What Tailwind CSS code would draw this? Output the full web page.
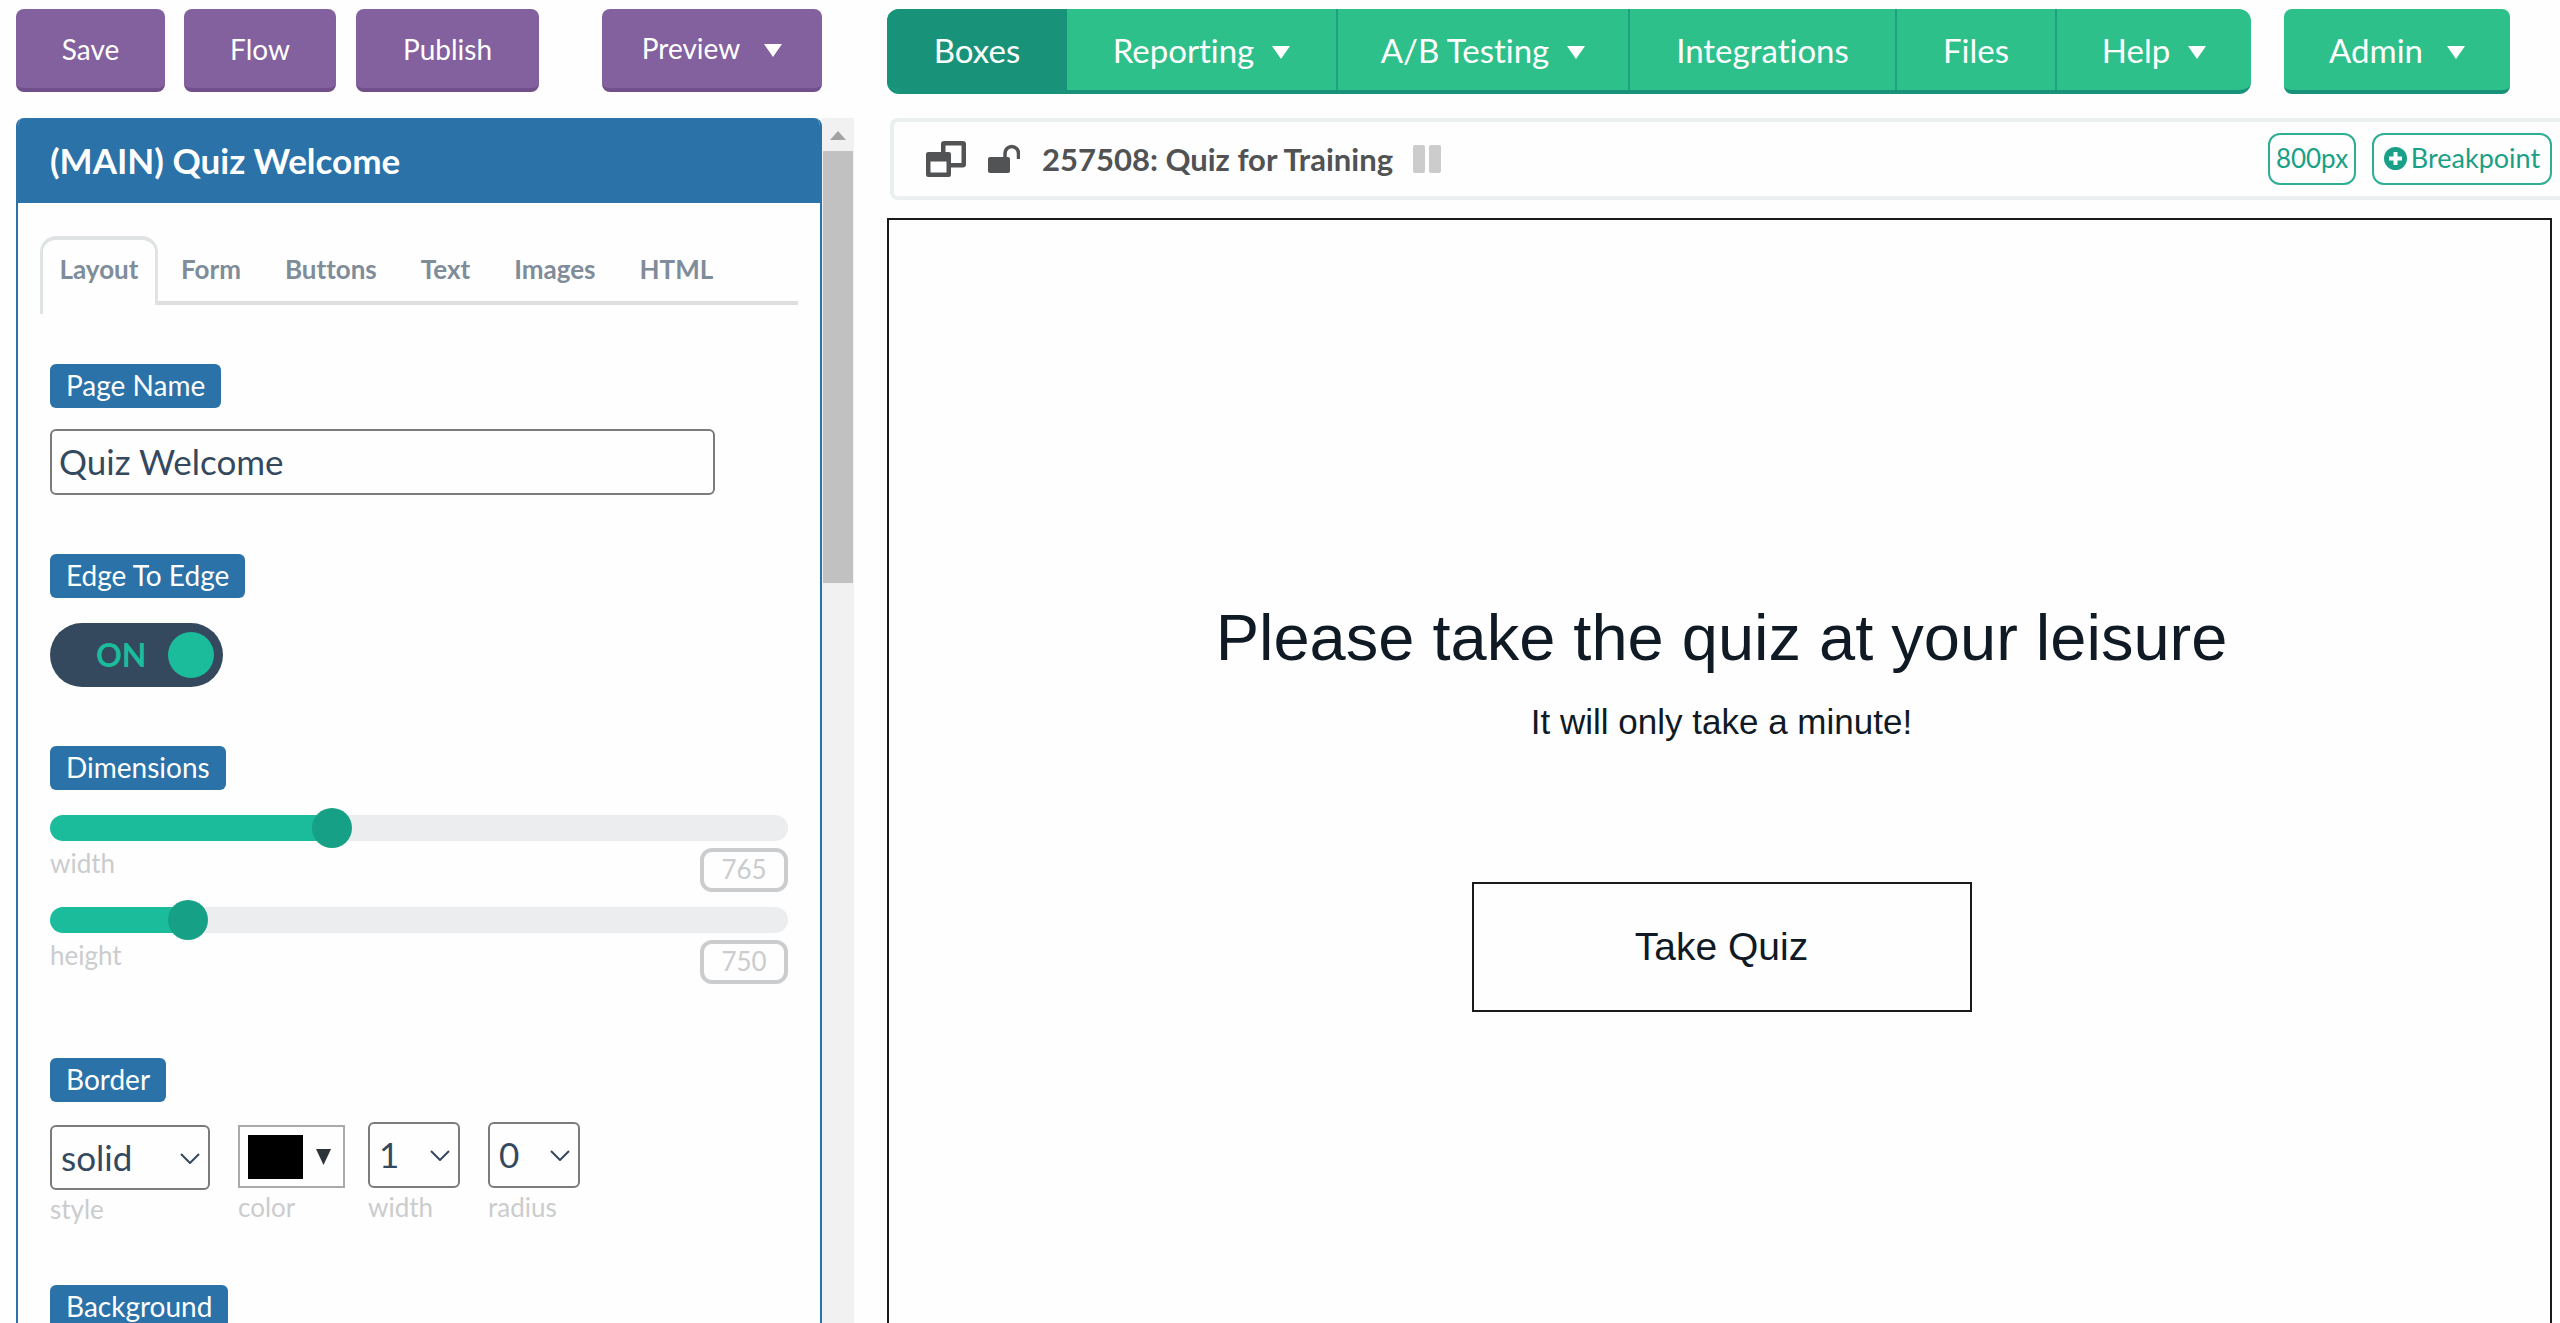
<!DOCTYPE html>
<html lang="en">
<head>
<meta charset="utf-8">
<meta name="viewport" content="width=device-width, initial-scale=1">
<title>Quiz for Training</title>
<script src="https://cdn.jsdelivr.net/npm/@tailwindcss/browser@4"></script>
</head>
<body class="flex h-screen overflow-hidden bg-[#fefefe] font-['Lato',sans-serif] text-[28px] leading-9 text-[#34495e] [font-variant-ligatures:none]">

<!-- Editor column -->
<div class="flex w-[854px] shrink-0 flex-col pt-[9px]">
  <div class="flex pl-4 pr-8 text-[28px] text-white">
    <button class="h-[83px] w-[149px] rounded-lg border-b-4 border-[#714f8a] bg-[#83619e]">Save</button>
    <button class="ml-[19px] h-[83px] w-[152px] rounded-lg border-b-4 border-[#714f8a] bg-[#83619e]">Flow</button>
    <button class="ml-5 h-[83px] w-[183px] rounded-lg border-b-4 border-[#714f8a] bg-[#83619e]">Publish</button>
    <button class="ml-auto flex h-[83px] w-[220px] items-center justify-center gap-6 rounded-lg border-b-4 border-[#714f8a] bg-[#83619e] pb-0.5">Preview
      <svg class="mt-1.5 h-[13px] w-[18px]" viewBox="0 0 18 13" fill="currentColor"><path d="M0 0h18L9 13z"/></svg>
    </button>
  </div>

  <div class="mt-[26px] flex min-h-0 flex-1 pl-4">
    <section class="flex min-w-0 flex-1 flex-col overflow-hidden rounded-t-lg border-x-2 border-[#2a72a8]">
      <h1 class="flex h-[85px] shrink-0 items-center bg-[#2a72a8] pb-0.5 pl-8 text-[35px] leading-10 font-bold text-white">(MAIN) Quiz Welcome</h1>

      <nav class="mx-[22px] mt-[33px] flex h-[69px] shrink-0 text-[26px] font-bold text-[#7f8c9a]">
        <a href="#" class="relative w-[118px] shrink-0 rounded-t-2xl border-x-[3px] border-t-4 border-[#dfe3e4] pt-[11px] text-center after:absolute after:top-full after:-left-[3px] after:h-[9px] after:w-[3px] after:bg-[#dfe3e4]">Layout</a>
        <div class="flex flex-1 gap-11 border-b-4 border-[#dddedf] pt-[15px] pl-[23px]">
          <a href="#">Form</a>
          <a href="#">Buttons</a>
          <a href="#">Text</a>
          <a href="#">Images</a>
          <a href="#">HTML</a>
        </div>
      </nav>

      <form class="flex flex-col items-start px-8 pt-[59px]">
        <label for="page-name" class="flex h-11 items-center rounded-md bg-[#2a72a8] px-4 pb-0.5 text-white">Page Name</label>
        <input id="page-name" type="text" value="Quiz Welcome" class="mt-[21px] h-[66px] w-[665px] rounded-md border-2 border-[#7b7b7b] px-[7px] pb-0.5 text-[35px]">

        <label for="edge" class="mt-[59px] flex h-11 items-center rounded-md bg-[#2a72a8] px-4 pb-0.5 text-white">Edge To Edge</label>
        <label class="mt-[25px] flex h-16 w-[173px] items-center rounded-full bg-[#34495e] pr-[9px] pl-[46px] text-[32px] font-bold text-[#1abc9c]">ON
          <input id="edge" type="checkbox" checked class="ml-auto size-[46px] appearance-none rounded-full bg-[#1abc9c]">
        </label>

        <h2 class="mt-[59px] flex h-11 items-center rounded-md bg-[#2a72a8] px-4 pb-0.5 text-white">Dimensions</h2>
        <div class="mt-[18px] w-full text-[26px] text-[#cbcccd]">
          <input id="dim-w" type="range" min="0" max="2038" value="765" style="--fill:38%" class="block h-10 w-full appearance-none bg-transparent [&::-webkit-slider-runnable-track]:h-[26px] [&::-webkit-slider-runnable-track]:rounded-full [&::-webkit-slider-runnable-track]:bg-[linear-gradient(to_right,#1abc9c_var(--fill),#ebedef_var(--fill))] [&::-webkit-slider-thumb]:-mt-[7px] [&::-webkit-slider-thumb]:size-10 [&::-webkit-slider-thumb]:appearance-none [&::-webkit-slider-thumb]:rounded-full [&::-webkit-slider-thumb]:bg-[#16a085]">
          <div class="flex items-start justify-between">
            <label for="dim-w" class="leading-[30px]">width</label>
            <output for="dim-w" class="flex h-11 w-[88px] items-center justify-center rounded-xl border-4 border-[#cbcccd] pb-0.5">765</output>
          </div>
        </div>
        <div class="mt-2 w-full text-[26px] text-[#cbcccd]">
          <input id="dim-h" type="range" min="0" max="4438" value="750" style="--fill:18%" class="block h-10 w-full appearance-none bg-transparent [&::-webkit-slider-runnable-track]:h-[26px] [&::-webkit-slider-runnable-track]:rounded-full [&::-webkit-slider-runnable-track]:bg-[linear-gradient(to_right,#1abc9c_var(--fill),#ebedef_var(--fill))] [&::-webkit-slider-thumb]:-mt-[7px] [&::-webkit-slider-thumb]:size-10 [&::-webkit-slider-thumb]:appearance-none [&::-webkit-slider-thumb]:rounded-full [&::-webkit-slider-thumb]:bg-[#16a085]">
          <div class="flex items-start justify-between">
            <label for="dim-h" class="leading-[30px]">height</label>
            <output for="dim-h" class="flex h-11 w-[88px] items-center justify-center rounded-xl border-4 border-[#cbcccd] pb-0.5">750</output>
          </div>
        </div>

        <h2 class="mt-[74px] flex h-11 items-center rounded-md bg-[#2a72a8] px-4 pb-0.5 text-white">Border</h2>
        <div class="mt-5 flex items-start text-[26px] text-[#cbcccd]">
          <div class="relative mt-[3px] flex w-40 flex-col">
            <select id="b-style" class="h-[65px] appearance-none rounded-md border-2 border-[#7b7b7b] bg-[#fefefe] pb-0.5 pl-[9px] text-[35px] text-[#34495e]"><option>solid</option></select>
            <svg class="pointer-events-none absolute top-7 right-[10px] h-[11px] w-5" viewBox="0 0 20 11" fill="none" stroke="#34495e" stroke-width="2"><path d="M1 1l9 9 9-9"/></svg>
            <label for="b-style" class="mt-px">style</label>
          </div>
          <div class="mt-[3px] ml-7 flex w-[107px] flex-col">
            <button type="button" id="b-color" class="flex h-[63px] items-center justify-between border-2 border-[#aaaaaa] pr-3 pl-2">
              <span class="h-11 w-[55px] bg-black"></span>
              <svg class="h-4 w-[15px]" viewBox="0 0 15 16" fill="#2b333b"><path d="M0 0h15L7.500 16z"/></svg>
            </button>
            <label for="b-color" class="mt-px">color</label>
          </div>
          <div class="relative ml-[23px] flex w-[92px] flex-col">
            <select id="b-width" class="h-[66px] appearance-none rounded-md border-2 border-[#7b7b7b] bg-[#fefefe] pb-0.5 pl-[9px] text-[35px] text-[#34495e]"><option>1</option></select>
            <svg class="pointer-events-none absolute top-7 right-[10px] h-[11px] w-5" viewBox="0 0 20 11" fill="none" stroke="#34495e" stroke-width="2"><path d="M1 1l9 9 9-9"/></svg>
            <label for="b-width" class="mt-px">width</label>
          </div>
          <div class="relative ml-7 flex w-[92px] flex-col">
            <select id="b-radius" class="h-[66px] appearance-none rounded-md border-2 border-[#7b7b7b] bg-[#fefefe] pb-0.5 pl-[9px] text-[35px] text-[#34495e]"><option>0</option></select>
            <svg class="pointer-events-none absolute top-7 right-[10px] h-[11px] w-5" viewBox="0 0 20 11" fill="none" stroke="#34495e" stroke-width="2"><path d="M1 1l9 9 9-9"/></svg>
            <label for="b-radius" class="mt-px">radius</label>
          </div>
        </div>

        <h2 class="mt-[58px] flex h-11 items-center rounded-md bg-[#2a72a8] px-4 pb-0.5 text-white">Background</h2>
      </form>
    </section>

    <!-- Panel scrollbar -->
    <div class="flex w-8 shrink-0 flex-col items-center bg-[#f1f1f1]">
      <svg class="mt-[13px] h-[9px] w-4" viewBox="0 0 16 10" preserveAspectRatio="none" fill="#a3a3a3"><path d="M8 0l8 10H0z"/></svg>
      <div class="mt-[11px] h-[432px] w-[30px] bg-[#c1c1c1]"></div>
    </div>
  </div>
</div>

<!-- Workspace column -->
<main class="flex min-w-0 flex-1 flex-col pt-[9px] pl-[33px]">
  <div class="flex text-[33px] text-white">
    <nav class="flex h-[85px] overflow-hidden rounded-xl border-b-4 border-[#18937a] bg-[#2ec08a]">
      <a href="#" class="flex w-[180px] items-center justify-center bg-[#18937a]">Boxes</a>
      <a href="#" class="flex w-[271px] items-center justify-center gap-[18px] border-r-2 border-[#1fa07f]">Reporting
        <svg class="mt-1.5 h-[13px] w-[18px]" viewBox="0 0 18 13" fill="currentColor"><path d="M0 0h18L9 13z"/></svg></a>
      <a href="#" class="flex w-[292px] items-center justify-center gap-[18px] border-r-2 border-[#1fa07f]">A/B Testing
        <svg class="mt-1.5 h-[13px] w-[18px]" viewBox="0 0 18 13" fill="currentColor"><path d="M0 0h18L9 13z"/></svg></a>
      <a href="#" class="flex w-[267px] items-center justify-center border-r-2 border-[#1fa07f]">Integrations</a>
      <a href="#" class="flex w-[160px] items-center justify-center border-r-2 border-[#1fa07f]">Files</a>
      <a href="#" class="flex w-[194px] items-center justify-center gap-[18px]">Help
        <svg class="mt-1.5 h-[13px] w-[18px]" viewBox="0 0 18 13" fill="currentColor"><path d="M0 0h18L9 13z"/></svg></a>
    </nav>
    <button class="ml-[33px] flex h-[85px] w-[226px] items-center justify-center gap-6 rounded-lg border-b-4 border-[#18937a] bg-[#2ec08a]">Admin
      <svg class="mt-1.5 h-[13px] w-[18px]" viewBox="0 0 18 13" fill="currentColor"><path d="M0 0h18L9 13z"/></svg>
    </button>
  </div>

  <div class="mt-6 ml-[3px] flex h-[82px] shrink-0 items-center rounded-l-lg border-4 border-r-0 border-[#ebeff0] pr-2 pl-8 text-[#505253]">
    <button aria-label="Boxes view"><svg class="h-9 w-10" viewBox="0 0 40 36" fill="none" stroke="#525354" stroke-width="4.500"><rect x="17.250" y="2.250" width="20.500" height="22" rx="1"/><path d="M2.250 13.250h20.500v20.500H2.250z" fill="#fefefe" stroke-linejoin="round"/><path d="M2.250 16.500h20.500" stroke-width="8"/></svg></button>
    <button aria-label="Unlock" class="ml-[22px]"><svg class="h-[30px] w-8" viewBox="0 0 32 30"><rect y="13" width="22" height="16" rx="2" fill="#525354"/><path d="M17 14V9.500a6.750 7 0 0 1 13.500 0V15" fill="none" stroke="#525354" stroke-width="3.500"/></svg></button>
    <h2 class="ml-[22px] text-[31px] leading-10 font-bold">257508: Quiz for Training</h2>
    <div class="ml-5 flex gap-1"><span class="h-7 w-3 rounded-xs bg-[#cccccc]"></span><span class="h-7 w-3 rounded-xs bg-[#cccccc]"></span></div>
    <button class="ml-auto h-[52px] w-[88px] rounded-xl border-2 border-[#2fae96] pb-0.5 text-[26px] text-[#19a086]">800px</button>
    <button class="ml-4 flex h-[52px] w-[180px] items-center justify-center gap-1 rounded-xl border-2 border-[#2fae96] pb-0.5 text-[27px] text-[#19a086]">
      <svg class="size-[23px]" viewBox="0 0 23 23"><circle cx="11.500" cy="11.500" r="11.500" fill="#19a086"/><path d="M11.500 5v13M5 11.500h13" stroke="#fefefe" stroke-width="4"/></svg>Breakpoint</button>
  </div>

  <section class="mt-[18px] mr-2 flex min-h-0 flex-1 flex-col items-center border-2 border-b-0 border-[#1a1a1a] pt-[378px] pl-1 font-['Liberation_Sans',Arial,sans-serif] text-[#101a24]">
    <h1 class="text-[65px] leading-[80px]">Please take the quiz at your leisure</h1>
    <p class="mt-6 text-[35px] leading-10">It will only take a minute!</p>
    <button class="mt-[140px] h-[130px] w-[500px] shrink-0 border-2 border-[#1a1a1a] text-[39px]">Take Quiz</button>
  </section>
</main>
</body>
</html>
